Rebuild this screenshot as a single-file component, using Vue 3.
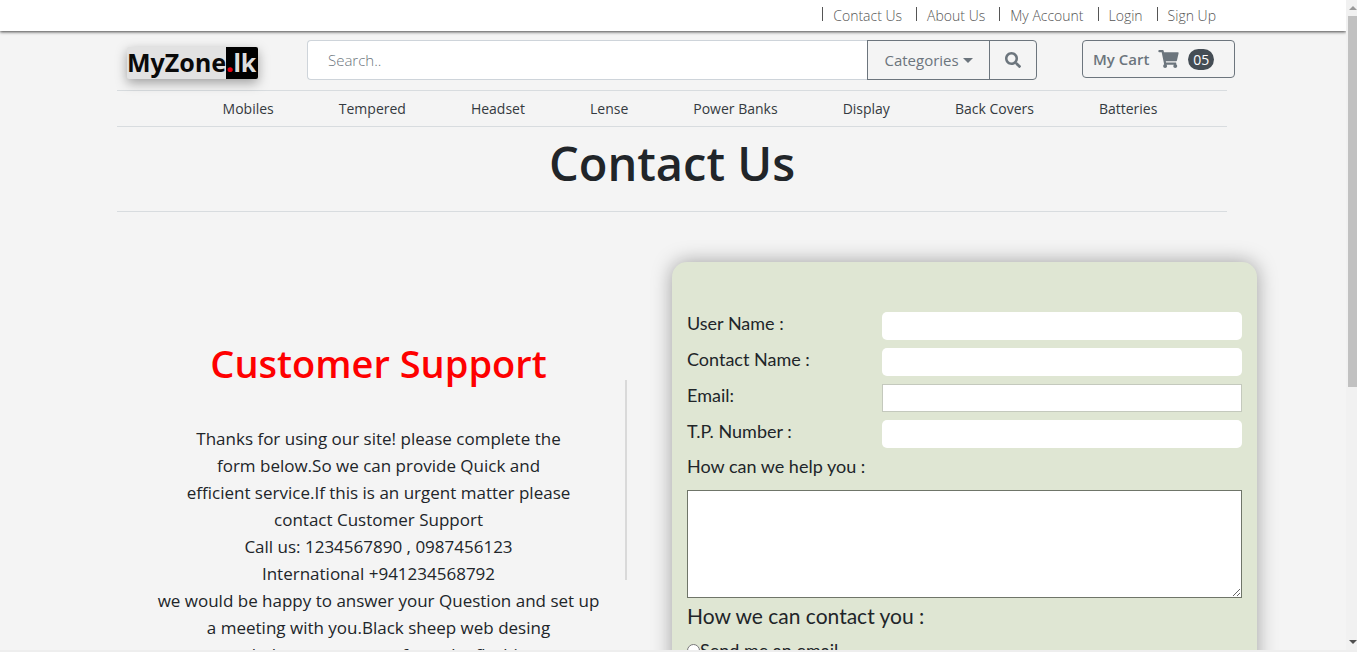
<script setup>
import { ref } from 'vue'

const topLinks = ['Contact Us', 'About Us', 'My Account', 'Login', 'Sign Up']
const categories = ['Mobiles', 'Tempered', 'Headset', 'Lense', 'Power Banks', 'Display', 'Back Covers', 'Batteries']
const fields = [
  { id: 'user', label: 'User Name :', type: 'text' },
  { id: 'contact', label: 'Contact Name :', type: 'text' },
  { id: 'email', label: 'Email:', type: 'email' },
  { id: 'phone', label: 'T.P. Number :', type: 'text' },
]
const search = ref('')
</script>

<template>
  <div class="window">
    <div class="viewport">
      <nav class="topbar">
        <a v-for="link in topLinks" :key="link" href="#">{{ link }}</a>
      </nav>
      <div class="page">
        <header class="header">
          <a class="logo" href="#"><span class="logo-name">MyZone</span><span class="logo-tld"><b>.</b>lk</span></a>
          <form class="search" @submit.prevent>
            <input v-model="search" type="text" placeholder="Search.." aria-label="Search" />
            <button class="cats" type="button">Categories <i class="caret"></i></button>
            <button class="go" type="submit" aria-label="Search">
              <svg viewBox="0 0 512 512" width="16" height="16"><path fill="currentColor" d="M505 442.7L405.3 343c-4.5-4.5-10.6-7-17-7H372c27.6-35.3 44-79.7 44-128C416 93.1 322.9 0 208 0S0 93.1 0 208s93.1 208 208 208c48.300 0 92.700-16.400 128-44v16.300c0 6.400 2.500 12.500 7 17l99.700 99.700c9.400 9.400 24.600 9.400 33.900 0l28.300-28.300c9.400-9.400 9.400-24.600.1-34zM208 336c-70.700 0-128-57.200-128-128 0-70.700 57.200-128 128-128 70.700 0 128 57.200 128 128 0 70.700-57.200 128-128 128z" /></svg>
            </button>
          </form>
          <button class="cart" type="button">
            My Cart
            <svg viewBox="0 0 576 512" width="21" height="18"><path fill="currentColor" d="M528.1 301.300l47.300-208C578.800 78.300 567.400 64 552 64H159.200l-9.200-44.800C147.800 8 137.900 0 126.500 0H24C10.700 0 0 10.700 0 24v16c0 13.300 10.700 24 24 24h69.900l70.200 343.400C147.300 417.100 136 435.200 136 456c0 30.900 25.100 56 56 56s56-25.100 56-56c0-15.700-6.400-29.800-16.800-40h209.600C430.400 426.200 424 440.300 424 456c0 30.900 25.100 56 56 56s56-25.100 56-56c0-22.200-12.900-41.300-31.600-50.400l5.500-24.300c3.400-15-8-29.300-23.400-29.300H218.100l-6.500-32h293.100c11.200 0 20.900-7.800 23.400-18.700z" /></svg>
            <span class="count">05</span>
          </button>
        </header>
        <nav class="catbar">
          <a v-for="c in categories" :key="c" href="#">{{ c }}</a>
        </nav>
        <h1>Contact Us</h1>
        <main class="columns">
          <section class="support">
            <h2>Customer Support</h2>
            <p>
              Thanks for using our site! please complete the<br />form below.So we can provide Quick and<br />efficient service.If this is an urgent matter please<br />contact Customer Support<br />Call us: 1234567890 , 0987456123<br />International +941234568792<br />we would be happy to answer your Question and set up<br />a meeting with you.Black sheep web desing<br />can help you grow you from the flashing
            </p>
          </section>
          <div class="divider"></div>
          <form class="card" @submit.prevent>
            <div v-for="f in fields" :key="f.id" class="row">
              <label :for="f.id">{{ f.label }}</label>
              <input :id="f.id" :type="f.type" />
            </div>
            <label class="help" for="message">How can we help you :</label>
            <textarea id="message"></textarea>
            <fieldset>
              <legend>How we can contact you :</legend>
              <label class="choice"><input type="radio" name="reply" />Send me an email</label>
            </fieldset>
          </form>
        </main>
      </div>
    </div>
    <div class="scrollbar">
      <i class="arrow up"></i>
      <div class="thumb"></div>
      <i class="arrow down"></i>
    </div>
  </div>
</template>

<style>
body {
  background: #f4f4f4;
}
</style>

<style scoped>
* {
  box-sizing: border-box;
}
.window {
  display: flex;
  height: 100vh;
  overflow: hidden;
  border-bottom: 2px solid #eeeeee;
  background: #f4f4f4;
  color: #212529;
  font-family: "Open Sans", "Noto Sans", sans-serif;
}
a {
  color: inherit;
  text-decoration: none;
}
.viewport {
  flex: 1;
  min-width: 0;
  overflow: hidden;
}
.topbar {
  position: relative;
  display: flex;
  justify-content: flex-end;
  gap: 14px;
  height: 31px;
  padding: 7px 130px 0 0;
  background: #fff;
  box-shadow: 0 1px 3px #444;
  font-size: 14px;
  font-weight: 300;
  line-height: 17px;
  color: #555;
}
.topbar a {
  height: 14px;
  padding-left: 10px;
  border-left: 1px solid #555;
}
.page {
  padding: 9px 89px 0 117px;
}
.header {
  display: flex;
  align-items: flex-start;
  height: 50px;
  margin-right: 22px;
}
.logo {
  display: flex;
  margin: 7px 49px 0 10px;
  height: 32px;
  width: 131px;
  background: #e2e2e2;
  border-radius: 2px;
  box-shadow: 0 4px 12px rgba(0, 0, 0, 0.35);
  font-family: "Noto Sans", sans-serif;
  font-size: 25px;
  font-weight: 700;
  line-height: 31px;
  color: #0a0a0a;
}
.logo-name {
  flex: 1;
}
.logo-tld {
  width: 33px;
  border-radius: 0 2px 2px 0;
  background: #000;
  color: #ddd;
}
.logo-tld b {
  color: #e60012;
}
.search {
  display: flex;
  flex: 1;
  height: 40px;
}
.search input {
  flex: 1;
  min-width: 0;
  padding: 0 20px;
  border: 1px solid #ced4da;
  border-right: 0;
  border-radius: 4px 0 0 4px;
  background: #fff;
  font: 300 15px "Open Sans", sans-serif;
}
.search input::placeholder {
  color: #6c757d;
}
button {
  border: 1px solid #6c757d;
  background: transparent;
  color: #6c757d;
  font: 400 15px "Open Sans", sans-serif;
}
.cats {
  width: 123px;
  padding: 0;
}
.caret {
  display: inline-block;
  border: 5px solid transparent;
  border-top-color: #6c757d;
  border-bottom: 0;
  vertical-align: 3px;
}
.go {
  width: 48px;
  margin-left: -1px;
  padding: 0;
  border-radius: 0 4px 4px 0;
}
.go svg {
  vertical-align: -2px;
}
.cart {
  display: flex;
  align-items: center;
  gap: 9px;
  width: 153px;
  height: 38px;
  margin-left: 45px;
  padding: 0 10px;
  border-radius: 4px;
  font-weight: 600;
  white-space: nowrap;
}
.count {
  width: 26px;
  border-radius: 11px;
  background: #454d55;
  color: #fff;
  font-size: 14px;
  font-weight: 400;
  line-height: 21px;
}
.catbar {
  display: flex;
  justify-content: center;
  gap: 65px;
  height: 37px;
  margin-right: 30px;
  padding-left: 36px;
  border: solid #d8dcdf;
  border-width: 1px 0;
  font-size: 14px;
  line-height: 36px;
  color: #343a40;
}
h1 {
  height: 85px;
  margin: 0 30px 0 0;
  border-bottom: 1px solid #d8dcdf;
  font-size: 47px;
  font-weight: 600;
  line-height: 72px;
  text-align: center;
}
.columns {
  display: flex;
  align-items: flex-start;
  padding-top: 50px;
}
.support {
  flex: 1;
  padding: 76px 0 0 15px;
  text-align: center;
}
h2 {
  margin: 0 0 37px;
  color: #fe0000;
  font-size: 38px;
  font-weight: 600;
  line-height: 50px;
}
p {
  margin: 0;
  font-size: 17px;
  line-height: 27px;
  white-space: nowrap;
}
.divider {
  width: 2px;
  height: 200px;
  margin: 118px 45px 0 0;
  background: #d9d9d9;
}
.card {
  width: 585px;
  padding: 50px 15px;
  border-radius: 15px;
  background: #dfe6d3;
  box-shadow: 0 0 20px rgba(0, 0, 0, 0.35);
  font-family: Lato, sans-serif;
  font-size: 18px;
  line-height: 22px;
}
.row {
  display: flex;
  justify-content: space-between;
  margin-bottom: 8px;
}
.row input {
  width: 360px;
  height: 28px;
  border: 0;
  border-radius: 5px;
  background: #fff;
}
.row input[type="email"] {
  border: 1px solid #c4c9bd;
  border-radius: 0;
}
.help {
  display: block;
  line-height: 20px;
}
textarea {
  display: block;
  width: 100%;
  height: 108px;
  margin-top: 14px;
  border: 1px solid #6f7569;
  background: #fff;
}
fieldset {
  margin: 0;
  padding: 0;
  border: 0;
}
legend {
  padding: 0;
  font-size: 21px;
  line-height: 36px;
}
.choice {
  display: flex;
  align-items: center;
  margin-top: 5px;
}
.choice input {
  width: 13px;
  height: 13px;
  margin: 0;
}
.scrollbar {
  display: flex;
  flex-direction: column;
  align-items: flex-end;
  width: 11px;
  background: #f1f1f1;
}
.thumb {
  width: 9px;
  height: 57%;
  margin-bottom: auto;
  background: #c1c1c1;
}
.arrow {
  margin: 6px 0;
  border: 4px solid transparent;
}
.up {
  border-top: 0;
  border-bottom-color: #999;
}
.down {
  border-bottom: 0;
  border-top-color: #505050;
}
</style>
